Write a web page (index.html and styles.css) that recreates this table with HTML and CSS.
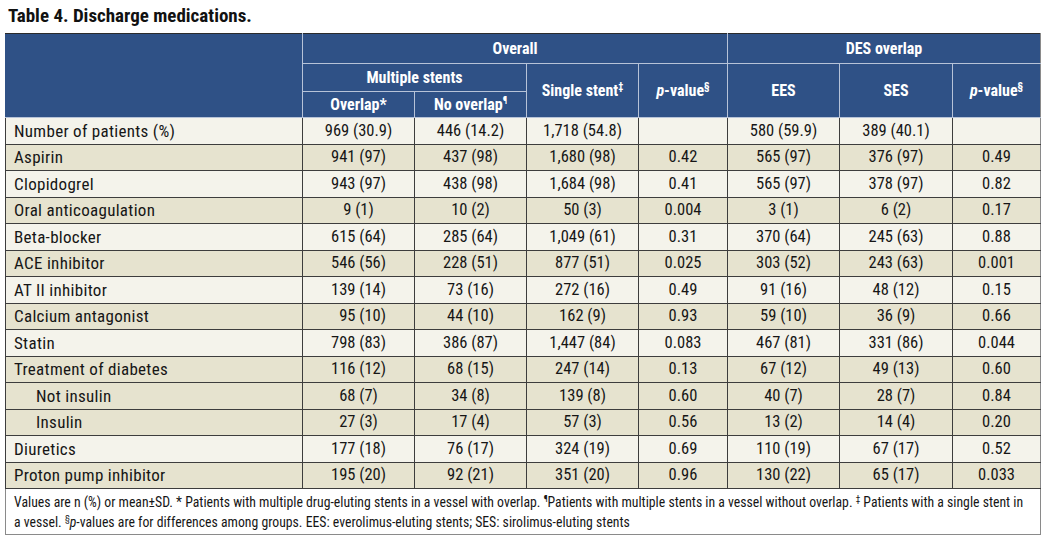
FILE: index.html
```html
<!DOCTYPE html>
<html lang="en">
<head>
<meta charset="utf-8">
<title>Table 4. Discharge medications.</title>
<link rel="stylesheet" href="styles.css">
</head>
<body>
<h1 class="caption">Table 4. Discharge medications.</h1>
<table class="data">
  <colgroup>
    <col class="c-label">
    <col class="c-num">
    <col class="c-num">
    <col class="c-num">
    <col class="c-p">
    <col class="c-num">
    <col class="c-num2">
    <col class="c-p2">
  </colgroup>
  <thead>
    <tr class="h1">
      <th rowspan="3"></th>
      <th colspan="4">Overall</th>
      <th colspan="3">DES overlap</th>
    </tr>
    <tr class="h2">
      <th colspan="2">Multiple stents</th>
      <th rowspan="2">Single stent<sup>‡</sup></th>
      <th rowspan="2"><i>p</i>-value<sup>§</sup></th>
      <th rowspan="2">EES</th>
      <th rowspan="2">SES</th>
      <th rowspan="2"><i>p</i>-value<sup>§</sup></th>
    </tr>
    <tr class="h3">
      <th>Overlap*</th>
      <th>No overlap<sup>¶</sup></th>
    </tr>
  </thead>
  <tbody>
    <tr class="light"><td class="lab">Number of patients (%)</td><td>969 (30.9)</td><td>446 (14.2)</td><td>1,718 (54.8)</td><td></td><td>580 (59.9)</td><td>389 (40.1)</td><td></td></tr>
    <tr class="dark"><td class="lab">Aspirin</td><td>941 (97)</td><td>437 (98)</td><td>1,680 (98)</td><td>0.42</td><td>565 (97)</td><td>376 (97)</td><td>0.49</td></tr>
    <tr class="light"><td class="lab">Clopidogrel</td><td>943 (97)</td><td>438 (98)</td><td>1,684 (98)</td><td>0.41</td><td>565 (97)</td><td>378 (97)</td><td>0.82</td></tr>
    <tr class="dark"><td class="lab">Oral anticoagulation</td><td>9 (1)</td><td>10 (2)</td><td>50 (3)</td><td>0.004</td><td>3 (1)</td><td>6 (2)</td><td>0.17</td></tr>
    <tr class="light"><td class="lab">Beta-blocker</td><td>615 (64)</td><td>285 (64)</td><td>1,049 (61)</td><td>0.31</td><td>370 (64)</td><td>245 (63)</td><td>0.88</td></tr>
    <tr class="dark"><td class="lab">ACE inhibitor</td><td>546 (56)</td><td>228 (51)</td><td>877 (51)</td><td>0.025</td><td>303 (52)</td><td>243 (63)</td><td>0.001</td></tr>
    <tr class="light"><td class="lab">AT II inhibitor</td><td>139 (14)</td><td>73 (16)</td><td>272 (16)</td><td>0.49</td><td>91 (16)</td><td>48 (12)</td><td>0.15</td></tr>
    <tr class="dark"><td class="lab">Calcium antagonist</td><td>&#8199;95 (10)</td><td>44 (10)</td><td>162 (9)</td><td>0.93</td><td>59 (10)</td><td>36 (9)</td><td>0.66</td></tr>
    <tr class="light"><td class="lab">Statin</td><td>798 (83)</td><td>386 (87)</td><td>1,447 (84)</td><td>0.083</td><td>467 (81)</td><td>331 (86)</td><td>0.044</td></tr>
    <tr class="dark"><td class="lab">Treatment of diabetes</td><td>116 (12)</td><td>68 (15)</td><td>247 (14)</td><td>0.13</td><td>67 (12)</td><td>49 (13)</td><td>0.60</td></tr>
    <tr class="dark"><td class="lab indent">Not insulin</td><td>68 (7)</td><td>34 (8)</td><td>139 (8)</td><td>0.60</td><td>40 (7)</td><td>28 (7)</td><td>0.84</td></tr>
    <tr class="dark"><td class="lab indent">Insulin</td><td>27 (3)</td><td>17 (4)</td><td>57 (3)</td><td>0.56</td><td>13 (2)</td><td>14 (4)</td><td>0.20</td></tr>
    <tr class="light"><td class="lab">Diuretics</td><td>177 (18)</td><td>76 (17)</td><td>324 (19)</td><td>0.69</td><td>110 (19)</td><td>67 (17)</td><td>0.52</td></tr>
    <tr class="dark"><td class="lab">Proton pump inhibitor</td><td>195 (20)</td><td>92 (21)</td><td>351 (20)</td><td>0.96</td><td>130 (22)</td><td>65 (17)</td><td>0.033</td></tr>
  </tbody>
  <tfoot>
    <tr>
      <td colspan="8" class="notes">Values are n (%) or mean±SD. * Patients with multiple drug-eluting stents in a vessel with overlap. <sup>¶</sup>Patients with multiple stents in a vessel without overlap. <sup>‡</sup> Patients with a single stent in<br>a vessel. <sup>§</sup><i>p</i>-values are for differences among groups. EES: everolimus-eluting stents; SES: sirolimus-eluting stents</td>
    </tr>
  </tfoot>
</table>
</body>
</html>
```

FILE: styles.css
```css
html, body {
  margin: 0;
  padding: 0;
  background: #ffffff;
}

body {
  padding: 0 7px 0 5px;
  font-family: "Roboto Condensed", "Open Sans Condensed", "Open Sans", "DejaVu Sans Condensed", sans-serif;
  font-stretch: 75%;
  color: #1a1a1a;
}

.caption {
  margin: 0;
  padding: 6px 0 0 3px;
  height: 33px;
  box-sizing: border-box;
  font-size: 19px;
  font-weight: bold;
  line-height: 20px;
  color: #111;
}

.data {
  width: 1035px;
  table-layout: fixed;
  border-collapse: collapse;
  border: 1px solid #8a8a8a;
  font-size: 16.5px;
}

.c-label { width: 297px; }
.c-num { width: 112px; }
.c-num2 { width: 113px; }
.c-p { width: 89px; }
.c-p2 { width: 88px; }

.data thead th {
  background: #2f5186;
  color: #ffffff;
  font-weight: bold;
  font-size: 16px;
  line-height: 18px;
  text-align: center;
  padding: 0;
  border: 1px solid #b7c3d8;
}

.data thead tr.h1 th {
  border-top: 1px solid #2b2b2b;
}

.data thead tr.h1 th:first-child {
  border-left: 1px solid #2f5186;
}

.data thead tr.h1 th:last-child,
.data thead tr.h2 th:last-child {
  border-right: 1px solid #8a8a8a;
}

.data thead tr.h1 { height: 30px; }
.data thead tr.h2 { height: 28px; }
.data thead tr.h3 { height: 26px; }

.data thead th i {
  font-style: italic;
}

.data sup {
  font-size: 10px;
  vertical-align: 6px;
  line-height: 0;
}

.data tbody tr { height: 26.5px; }

.data tbody td {
  padding: 0;
  text-align: center;
  border: 1px solid #3d3d3d;
  color: #161616;
  white-space: nowrap;
  line-height: 18px;
}

.data tbody td.lab {
  text-align: left;
  padding-left: 8px;
  font-size: 17px;
  letter-spacing: 0.3px;
}

.data tbody td.indent {
  padding-left: 30px;
}

.data tbody td:last-child {
  border-right: 1px solid #8a8a8a;
}

.data tbody tr.light { background: #f4f3eb; }
.data tbody tr.dark { background: #e6e3cf; }

.data tfoot td.notes {
  background: #ffffff;
  border: 1px solid #8a8a8a;
  border-top: 1px solid #3d3d3d;
  padding: 3px 8px 2px 8px;
  font-size: 13.75px;
  line-height: 20px;
  color: #161616;
  white-space: nowrap;
}

.data tfoot sup {
  font-size: 9px;
  vertical-align: 5px;
}
```
